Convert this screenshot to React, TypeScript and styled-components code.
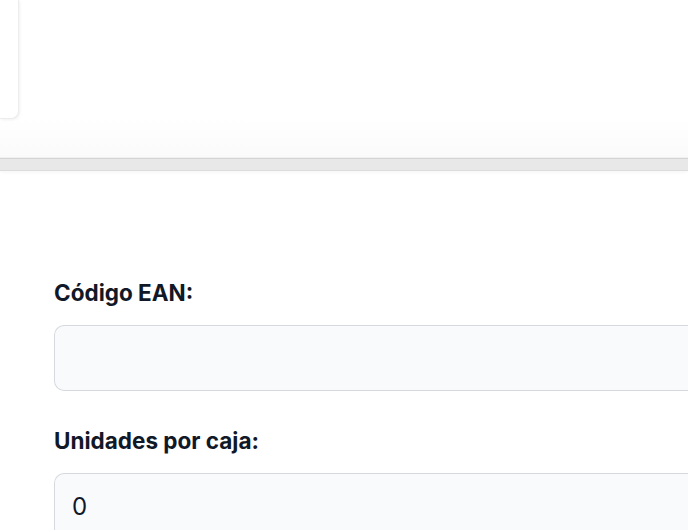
import styled, { createGlobalStyle } from 'styled-components';

// global
const GlobalStyle = createGlobalStyle`
  html, body {
    margin: 0;
    padding: 0;
    background: #ffffff;
    overflow: hidden;
  }
  body {
    font-family: Inter, "Liberation Sans", sans-serif;
    color: #111827;
  }
`;

// top area with the previous card
const TopArea = styled.div`
  height: 157px;
  background: linear-gradient(#ffffff 0, #ffffff 118px, #fafafa 157px);
  border-bottom: 1px solid #f0f0f0;
`;

const CardEdge = styled.div`
  width: 18px;
  height: 118px;
  background: #ffffff;
  border-right: 1px solid #ececec;
  border-bottom: 1px solid #ececec;
  border-bottom-right-radius: 8px;
  box-shadow: 1px 1px 3px rgba(0, 0, 0, 0.06);
`;

const Divider = styled.div`
  height: 11px;
  background: #e8e8e8;
  border-top: 1px solid #d4d4d4;
  border-bottom: 1px solid #dcdcdc;
  box-shadow: 0 2px 3px rgba(0, 0, 0, 0.03);
`;

// form
const FormBox = styled.form`
  display: flex;
  flex-direction: column;
  padding: 109px 0 0 54px;
`;

const Label = styled.label`
  font-size: 22.5px;
  line-height: 26px;
  font-weight: 700;
  color: #111827;
  margin-bottom: 19px;
`;

const Input = styled.input<{ $spaced?: boolean }>`
  box-sizing: border-box;
  width: 100%;
  height: 66px;
  padding: 0 17px;
  border: 1px solid #d6dae0;
  border-right: none;
  border-radius: 10px 0 0 10px;
  background: #f8fafc;
  font-family: Inter, "Liberation Sans", sans-serif;
  font-size: 24px;
  color: #111827;
  outline: none;
  margin-bottom: ${(p) => (p.$spaced ? '37px' : '0')};
`;

const App: React.FC = () => {
  return (
    <>
      <GlobalStyle />
      <TopArea>
        <CardEdge />
      </TopArea>
      <Divider />
      <FormBox>
        <Label htmlFor="ean">Código EAN:</Label>
        <Input id="ean" type="text" defaultValue="" $spaced />
        <Label htmlFor="units">Unidades por caja:</Label>
        <Input id="units" type="text" defaultValue="0" />
      </FormBox>
    </>
  );
};

export default App;
